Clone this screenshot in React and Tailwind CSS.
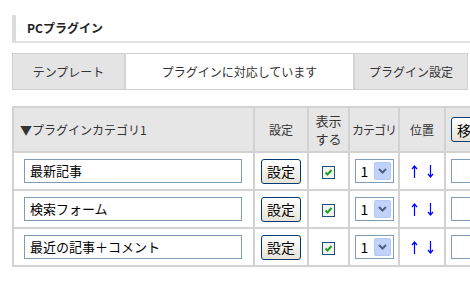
const rows = ["最新記事", "検索フォーム", "最近の記事＋コメント"];

const XpButton = ({ children, className }) => (
	<button
		className={`h-[25px] rounded-[3px] border border-[#003c74] bg-gradient-to-b from-white to-[#e6e3d6] text-[14px] text-black leading-none ${className}`}
	>
		{children}
	</button>
);

const Check = () => (
	<span className="inline-flex w-[13px] h-[13px] border border-[#1c5180] bg-[#f4f4f0] items-center justify-center align-middle">
		<svg width="9" height="9" viewBox="0 0 9 9">
			<path d="M1.5 4.5 L3.5 6.5 L7.5 2" stroke="#21a121" strokeWidth="2" fill="none" />
		</svg>
	</span>
);

const Select = () => (
	<div className="inline-flex w-[39px] h-[24px] border border-[#7f9db9] bg-white items-center justify-between pl-[5px] pr-[2px] align-middle">
		<span className="text-[14px] text-black leading-none">1</span>
		<span className="w-[17px] h-[18px] rounded-[2px] bg-[#c1d3fb] border border-[#b4c8f6] flex items-center justify-center">
			<svg width="9" height="6" viewBox="0 0 9 6">
				<path d="M1 1 L4.5 4.5 L8 1" stroke="#4d6185" strokeWidth="2" fill="none" />
			</svg>
		</span>
	</div>
);

// thin blue arrow, same as the ↑ ↓ glyphs
const Arrow = ({ down }) => (
	<svg width="7" height="13" viewBox="0 0 7 13" className={down ? "rotate-180" : ""}>
		<path d="M3.5 1 V13 M1 4 L3.5 1 L6 4" stroke="#0000ff" strokeWidth="1.2" fill="none" />
	</svg>
);

const App = () => {
	return (
		<div
			className="w-[470px] h-[285px] overflow-hidden bg-white text-[#333]"
			style={{ fontFamily: '"Noto Sans CJK JP", "Noto Sans", sans-serif' }}
		>
			{/* heading */}
			<div className="mt-[15px] ml-[12px] h-[28px] border-l-[4px] border-[#dcdcdc] border-b-[2px] border-b-[#e2e2e2] flex items-center pl-[11px] pb-[1px]">
				<h1 className="text-[12px] font-bold text-[#222] leading-none">PCプラグイン</h1>
			</div>

			{/* tabs */}
			<div className="mt-[10px] ml-[12px] w-[456px] h-[37px] flex border border-[#d0d0d0] text-[12px] text-[#333]">
				<div className="w-[113px] bg-[#e4e4e4] border-r-2 border-[#d4d4d4] flex items-center justify-center">
					テンプレート
				</div>
				<div className="w-[227px] bg-white flex items-center justify-center">
					プラグインに対応しています
				</div>
				<div className="flex-1 bg-[#e4e4e4] border-l-2 border-[#d4d4d4] flex items-center justify-center">
					プラグイン設定
				</div>
			</div>

			{/* table */}
			<table className="mt-[16px] ml-[12px] border-collapse table-fixed w-[520px] text-[12px]">
				<colgroup>
					<col className="w-[241px]" />
					<col className="w-[54px]" />
					<col className="w-[41px]" />
					<col className="w-[50px]" />
					<col className="w-[46px]" />
					<col className="w-[88px]" />
				</colgroup>
				<thead>
					<tr className="h-[45px] bg-[#e6e6e6]">
						<th className="border-2 border-[#d2d2d2] text-left font-normal pl-[6px] text-[#333]">▼プラグインカテゴリ1</th>
						<th className="border-2 border-[#d2d2d2] font-normal">設定</th>
						<th className="border-2 border-[#d2d2d2] font-normal leading-[18px] text-[13px]">
							表示
							<br />
							する
						</th>
						<th className="border-2 border-[#d2d2d2] font-normal tracking-[-1px]">カテゴリ</th>
						<th className="border-2 border-[#d2d2d2] font-normal">位置</th>
						<th className="border-2 border-[#d2d2d2] font-normal text-left pl-[5px]">
							<XpButton className="w-[60px] text-left pl-[5px]">移動</XpButton>
						</th>
					</tr>
				</thead>
				<tbody>
					{rows.map((name) => (
						<tr key={name} className="h-[38px]">
							<td className="border-2 border-[#d2d2d2] pl-[10px]">
								<div className="w-[218px] h-[24px] border border-[#7f9db9] flex items-center pl-[5px] text-[13px] text-black">
									{name}
								</div>
							</td>
							<td className="border-2 border-[#d2d2d2] text-center">
								<XpButton className="w-[40px]">設定</XpButton>
							</td>
							<td className="border-2 border-[#d2d2d2] text-center">
								<Check />
							</td>
							<td className="border-2 border-[#d2d2d2] text-center">
								<Select />
							</td>
							<td className="border-2 border-[#d2d2d2]">
								<div className="flex items-center justify-center gap-[9px]">
									<Arrow />
									<Arrow down />
								</div>
							</td>
							<td className="border-2 border-[#d2d2d2] pl-[5px]">
								<div className="w-[60px] h-[24px] border border-[#7f9db9]" />
							</td>
						</tr>
					))}
				</tbody>
			</table>
		</div>
	);
};

export default App;
